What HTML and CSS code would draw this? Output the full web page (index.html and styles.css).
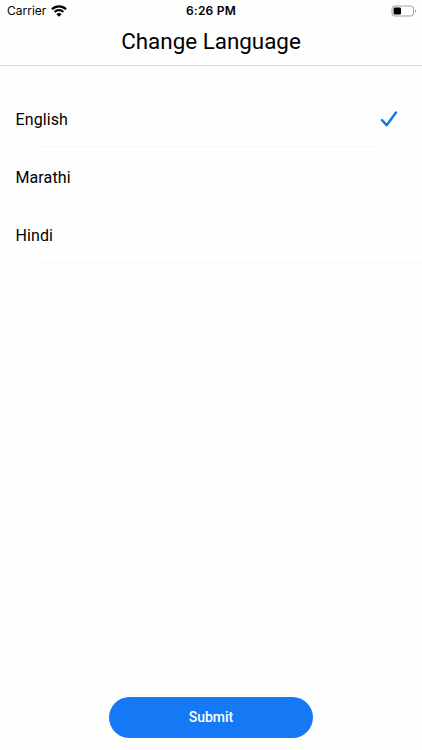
FILE: index.html
```html
<!DOCTYPE html>
<html lang="en">
<head>
  <meta charset="UTF-8" />
  <meta name="viewport" content="width=device-width, initial-scale=1.0">
  <title>Change Language</title>
  <link rel="stylesheet" href="styles.css">
</head>
<body>
  <div class="screen">
    <div class="header">
      <div class="status-bar">
        <div class="carrier">
          <span>Carrier</span>
          <svg class="wifi" viewBox="0 0 16 12" width="16" height="12">
            <path d="M1 4.2a10 10 0 0 1 14 0M3.6 7a6.3 6.3 0 0 1 8.8 0" fill="none" stroke="#000" stroke-width="2.3" />
            <path d="M8 11.8L5.4 9.2a3.7 3.7 0 0 1 5.2 0z" fill="#000" />
          </svg>
        </div>
        <div class="time">6:26 PM</div>
        <div class="battery">
          <svg viewBox="0 0 26 12" width="26" height="12">
            <rect x="1" y="1" width="21.5" height="10" rx="2.8" fill="#fff" stroke="#a0a0a0" />
            <rect x="2.6" y="2.6" width="7.4" height="6.9" rx="1.2" fill="#000" />
            <path d="M24 4.3c1.3.4 1.3 3 0 3.4z" fill="#999" />
          </svg>
        </div>
      </div>
      <h1>Change Language</h1>
    </div>

    <ul class="language-list">
      <li class="language selected">
        <span>English</span>
        <svg class="check" viewBox="0 0 18 18" width="18" height="18">
          <path d="M2 10.2L6.6 15.2L16 2.5" fill="none" stroke="#1677ee" stroke-width="2.5" stroke-linecap="round" stroke-linejoin="round" />
        </svg>
      </li>
      <li class="language">Marathi</li>
      <li class="language">Hindi</li>
    </ul>

    <div class="footer">
      <button class="submit-btn">Submit</button>
    </div>
  </div>
</body>
</html>
```

FILE: styles.css
```css
html, body {
  margin: 0;
  font-family: Roboto, sans-serif;
  background: #fefefe;
  color: #000;
}
.screen {
  display: flex;
  flex-direction: column;
  height: 750px;
}
.header {
  box-sizing: border-box;
  height: 66px;
  border-bottom: 1px solid #dcdcdc;
}
.status-bar {
  display: grid;
  grid-template-columns: 1fr auto 1fr;
  align-items: center;
  height: 21px;
  padding: 0 5px 0 7px;
  font-family: Inter, sans-serif;
  font-size: 12px;
}
.carrier {
  display: flex;
  align-items: center;
  gap: 5px;
}
.time {
  margin-left: -2px;
  font-weight: 600;
  letter-spacing: 0.25px;
}
.battery {
  display: flex;
  justify-content: flex-end;
}
h1 {
  margin: 6px 0 0;
  font-size: 22.4px;
  font-weight: 400;
  line-height: 28px;
  text-align: center;
}
.language-list {
  list-style: none;
  flex: 1;
  margin: 0;
  padding: 24px 0 0;
}
.language {
  display: flex;
  align-items: center;
  justify-content: space-between;
  box-sizing: border-box;
  height: 58px;
  padding: 0 24px 0 15.5px;
  font-size: 16px;
  letter-spacing: 0.1px;
  background: linear-gradient(#f8f8f8, #f8f8f8) 38px calc(100% - 1px) / 100% 1px no-repeat;
}
.language.selected {
  background-size: 338px 1px;
}
.footer {
  display: flex;
  justify-content: center;
  padding-bottom: 12px;
}
.submit-btn {
  width: 204px;
  height: 41px;
  padding: 0 0 2px;
  border: none;
  border-radius: 21px;
  background: #1578f5;
  color: #fff;
  font-family: inherit;
  font-size: 14px;
  font-weight: 500;
}
```
